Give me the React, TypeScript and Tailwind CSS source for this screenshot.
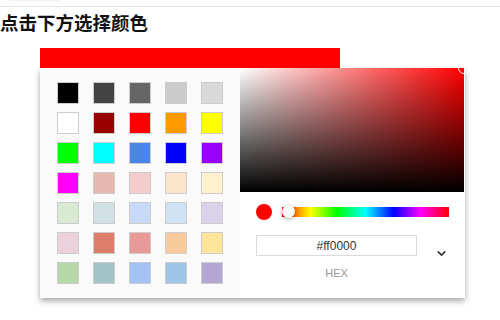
import { ChevronDown } from "lucide-react";

const swatches = [
  ["#000000", "#434343", "#666666", "#cccccc", "#d9d9d9"],
  ["#ffffff", "#980000", "#ff0000", "#ff9900", "#ffff00"],
  ["#00ff00", "#00ffff", "#4a86e8", "#0000ff", "#9900ff"],
  ["#ff00ff", "#e6b8af", "#f4cccc", "#fce5cd", "#fff2cc"],
  ["#d9ead3", "#d0e0e3", "#c9daf8", "#cfe2f3", "#d9d2e9"],
  ["#ead1dc", "#dd7e6b", "#ea9999", "#f9cb9c", "#ffe599"],
  ["#b6d7a8", "#a2c4c9", "#a4c2f4", "#9fc5e8", "#b4a7d6"],
];

function Swatches() {
  return (
    <div className="w-[200px] bg-[#fafafa] pl-[17px] pt-[14px]">
      <div className="grid grid-cols-[repeat(5,22px)] gap-x-[14px] gap-y-[8px]">
        {swatches.flat().map((c, i) => (
          <div
            key={i}
            className="w-[22px] h-[22px] border border-[#cccccc]"
            style={{ backgroundColor: c }}
          />
        ))}
      </div>
    </div>
  );
}

function ChromePicker() {
  return (
    <div className="w-[225px] bg-white flex flex-col">
      <div className="relative w-[224px] h-[124px] bg-[#ff0000]">
        <div className="absolute inset-0 bg-[linear-gradient(to_right,#fff,rgba(255,255,255,0))]" />
        <div className="absolute inset-0 bg-[linear-gradient(to_top,#000,rgba(0,0,0,0))]" />
        <div className="absolute right-[-6px] top-[-6px] w-[12px] h-[12px] rounded-full border-[1.5px] border-white" />
      </div>

      <div className="flex items-center pl-[16px] pt-[12px]">
        <div className="w-[16px] h-[16px] rounded-full bg-[#ff0000]" />
        <div className="relative ml-[10px] w-[167px] h-[10px] bg-[linear-gradient(to_right,#f00_0%,#ff0_17%,#0f0_33%,#0ff_50%,#00f_67%,#f0f_83%,#f00_100%)]">
          <div className="absolute left-0 top-[-2px] w-[13px] h-[13px] rounded-full bg-[#f8f8f8] shadow-[0_1px_4px_rgba(0,0,0,0.37)]" />
        </div>
      </div>

      <div className="flex pl-[16px] pt-[15px]">
        <div className="flex flex-col items-center">
          <div className="w-[161px] h-[21px] border border-[#dadada] flex items-center justify-center text-[12px] text-[#333] font-['Liberation_Sans',sans-serif]">
            #ff0000
          </div>
          <div className="mt-[10px] text-[11px] leading-[14px] text-[#969696] font-['Liberation_Sans',sans-serif]">
            HEX
          </div>
        </div>
        <div className="ml-[18px] mt-[12px]">
          <ChevronDown size={13} strokeWidth={3} color="#333" />
        </div>
      </div>
    </div>
  );
}

export default function App() {
  return (
    <div className="w-[500px] h-[320px] bg-white overflow-hidden font-['Noto_Sans_CJK_SC',sans-serif]">
      <div className="h-[6px]">
        <div className="ml-[9px] w-[50px] h-[1px] bg-[#f0f0f0]" />
      </div>
      <div className="h-px bg-[#e3e3e3]" />
      <h1 className="mt-[2px] text-[18.5px] leading-[26px] font-bold text-[#111]">
        点击下方选择颜色
      </h1>
      <div className="ml-[40px] mt-[13px] w-[300px] h-[20px] bg-[#ff0000]" />
      <div className="ml-[40px] w-[425px] h-[230px] flex shadow-[0_3px_6px_rgba(0,0,0,0.35)]">
        <Swatches />
        <ChromePicker />
      </div>
    </div>
  );
}
